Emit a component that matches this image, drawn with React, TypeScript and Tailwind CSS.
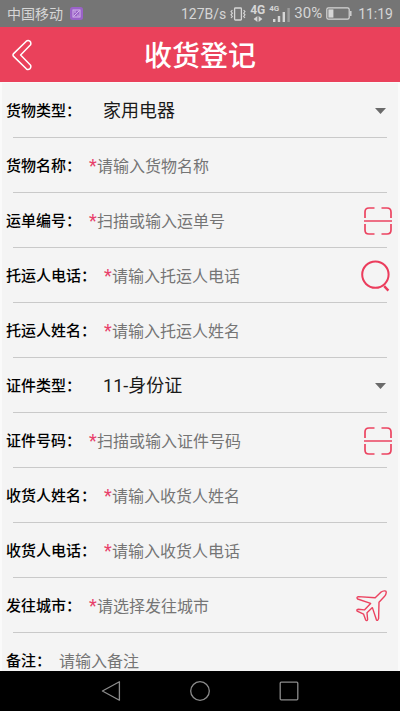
import { useId, type ReactNode } from "react";

function BackIcon() {
  return (
    <svg width="22" height="32" viewBox="0 0 22 32" fill="none" stroke="#fff" strokeWidth="1.5" strokeLinejoin="round">
      <path d="M14.3 2.2L1.6 14.6Q0.4 16 1.6 17.4L14.3 29.8Q16 31.2 17.8 29.9Q19.4 28.4 18.6 26.2L8.6 16L18.6 5.8Q19.4 3.6 17.8 2.1Q16 0.8 14.3 2.2Z" />
    </svg>
  );
}

function ScanIcon() {
  return (
    <svg width="28" height="28" viewBox="0 0 28 28" fill="none" stroke="#eb4360" strokeWidth="1.7">
      <path d="M1 11V5Q1 1 5 1H10.5M17.5 1H23Q27 1 27 5V11M27 17V23Q27 27 23 27H17.5M10.5 27H5Q1 27 1 23V17" />
      <path d="M0 14H28" strokeWidth="1.5" />
    </svg>
  );
}

function SearchIcon() {
  return (
    <svg width="29" height="32" viewBox="0 0 29 32" fill="none" stroke="#eb3c5c" strokeWidth="2">
      <circle cx="14.4" cy="14.6" r="13.2" />
      <path d="M23.2 26.2L27.4 30.6" strokeWidth="2.4" />
    </svg>
  );
}

function PlaneIcon() {
  return (
    <svg width="31" height="32" viewBox="0 0 31 32" fill="none" stroke="#eb4360" strokeWidth="1.4" strokeLinejoin="round">
      <path d="M19.2 7.8L24.6 2.4Q27.6 0.2 29.9 1.2Q31 3.4 28.4 6.6L23 12.2L22.6 28.6Q21.6 31.4 20.4 29.8L16.4 17.6L11 22.8L11.6 29.4Q10.8 31.6 9.6 29.8L7.6 24.2L1.2 21.2Q0.2 19.6 2.2 19.2L8.4 19.9L14.6 13.4L1.6 9Q0 7.4 2.4 6.6Z" />
    </svg>
  );
}

function StatusBar() {
  return (
    <div className="flex h-[27px] shrink-0 items-center justify-between bg-[#757575] px-[7px] text-[14px] leading-none text-[#d6d6d6]">
      <div className="flex items-center gap-[7px]">
        <span>中国移动</span>
        <svg width="13" height="13" viewBox="0 0 13 13" fill="none" stroke="#d3b5ea" strokeWidth="1">
          <rect width="13" height="13" rx="2.5" fill="#9a62c8" stroke="none" />
          <rect x="3" y="3" width="7" height="7" />
          <path d="M3.5 9.5L9.5 3.5M5 3.5V6M8 7.5V9.5" />
        </svg>
      </div>
      <div className="flex items-center gap-[4px]">
        <span>127B/s</span>
        <svg width="16" height="14" viewBox="0 0 16 14" fill="none" stroke="#d6d6d6" strokeWidth="1.3">
          <rect x="4.6" y="1" width="6.8" height="12" rx="0.8" />
          <path d="M2.4 3L1 4.6L2.4 6.2L1 7.8L2.4 9.4L1 11M13.6 3L15 4.6L13.6 6.2L15 7.8L13.6 9.4L15 11" strokeWidth="1.1" />
        </svg>
        <div className="flex w-[15px] flex-col items-center">
          <span className="text-[12px] font-bold leading-[11px]">4G</span>
          <svg width="10" height="6" viewBox="0 0 10 6" fill="#d6d6d6">
            <path d="M4.4 0V6L0.6 3ZM5.6 0V6L9.4 3Z" />
          </svg>
        </div>
        <div className="flex h-[18px] w-[21px] flex-col items-start">
          <span className="text-[8px] font-bold leading-[7px]">4G</span>
          <svg className="-mt-[4px] self-end" width="17" height="14" viewBox="0 0 17 14" fill="#d6d6d6">
            <path d="M0 11H2.4V14H0ZM4.8 8H7.2V14H4.8ZM9.6 4H12V14H9.6Z" />
            <path d="M14.4 0H16.8V14H14.4Z" fill="#9c9c9c" />
          </svg>
        </div>
        <span className="text-[15px]">30%</span>
        <svg width="26" height="13" viewBox="0 0 26 13" fill="none" stroke="#d6d6d6" strokeWidth="1.2">
          <rect x="0.8" y="0.8" width="22.4" height="11.4" rx="1.6" />
          <path d="M24.8 4V9" strokeWidth="1.4" />
          <rect x="2.4" y="2.4" width="5" height="8.2" fill="#d6d6d6" stroke="none" />
        </svg>
        <span className="pl-[2px]">11:19</span>
      </div>
    </div>
  );
}

function Row({ children }: { children: ReactNode }) {
  return (
    <div>
      <div className="flex h-[54px] items-center pl-[4px] pt-[2px]">{children}</div>
      <div className="mx-[11px] h-px bg-[#c9c9c9]" />
    </div>
  );
}

const labelClass = "shrink-0 text-[15px] font-medium leading-6 text-black";

function TextRow({
  label,
  placeholder,
  required = true,
  action,
}: {
  label: string;
  placeholder: string;
  required?: boolean;
  action?: ReactNode;
}) {
  const id = useId();
  return (
    <Row>
      <label htmlFor={id} className={labelClass}>
        {label}：
      </label>
      <div className="flex min-w-0 flex-1 items-center pl-[8px]">
        {required && <span className="w-[8px] shrink-0 text-[18px] leading-6 text-[#e8406a]">*</span>}
        <input
          id={id}
          type="text"
          placeholder={placeholder}
          className="h-10 min-w-0 flex-1 bg-transparent text-[16px] leading-6 text-[#222] outline-none placeholder:text-[#757575] placeholder:opacity-100"
        />
      </div>
      {action}
    </Row>
  );
}

function SelectRow({ label, options }: { label: string; options: string[] }) {
  const id = useId();
  return (
    <Row>
      <label htmlFor={id} className={labelClass}>
        {label}：
      </label>
      <div className="relative ml-[22px] mr-[12px] flex-1">
        <select id={id} className="w-full appearance-none bg-transparent text-[18px] leading-7 text-[#1a1a1a] outline-none">
          {options.map((option) => (
            <option key={option}>{option}</option>
          ))}
        </select>
        <svg className="pointer-events-none absolute right-0 top-1/2 -translate-y-1/2" width="11" height="6" viewBox="0 0 11 6" fill="#6a6a6a">
          <path d="M0 0H11L5.5 6Z" />
        </svg>
      </div>
    </Row>
  );
}

function ScanButton() {
  return (
    <button type="button" aria-label="扫描" className="mr-[6px] shrink-0">
      <ScanIcon />
    </button>
  );
}

export default function App() {
  return (
    <div className="flex h-screen flex-col overflow-hidden font-[Roboto,'Noto_Sans_CJK_SC',sans-serif]">
      <StatusBar />
      <header className="grid h-[55px] shrink-0 grid-cols-[44px_1fr_44px] items-center bg-[#ea415b]">
        <button type="button" aria-label="返回" className="pl-[12px]">
          <BackIcon />
        </button>
        <h1 className="pt-[4px] text-center text-[28px] font-medium leading-10 text-white">收货登记</h1>
      </header>
      <main className="min-h-0 flex-1 overflow-hidden bg-[#fafafa] px-[2px] pt-px">
        <form className="bg-[#f4f4f4]">
          <SelectRow label="货物类型" options={["家用电器"]} />
          <TextRow label="货物名称" placeholder="请输入货物名称" />
          <TextRow label="运单编号" placeholder="扫描或输入运单号" action={<ScanButton />} />
          <TextRow
            label="托运人电话"
            placeholder="请输入托运人电话"
            action={
              <button type="button" aria-label="查询" className="mr-[8px] shrink-0">
                <SearchIcon />
              </button>
            }
          />
          <TextRow label="托运人姓名" placeholder="请输入托运人姓名" />
          <SelectRow label="证件类型" options={["11-身份证"]} />
          <TextRow label="证件号码" placeholder="扫描或输入证件号码" action={<ScanButton />} />
          <TextRow label="收货人姓名" placeholder="请输入收货人姓名" />
          <TextRow label="收货人电话" placeholder="请输入收货人电话" />
          <TextRow
            label="发往城市"
            placeholder="请选择发往城市"
            action={
              <button type="button" aria-label="选择城市" className="mr-[11px] shrink-0">
                <PlaneIcon />
              </button>
            }
          />
          <TextRow label="备注" placeholder="请输入备注" required={false} />
        </form>
      </main>
      <nav className="flex h-[40px] shrink-0 items-center justify-center gap-[69px] bg-black">
        <button type="button" aria-label="后退">
          <svg width="20" height="20" viewBox="0 0 20 20" fill="none" stroke="#8c8c8c" strokeWidth="1.3" strokeLinejoin="round">
            <path d="M18.4 0.8V19.2L1.4 10Z" />
          </svg>
        </button>
        <button type="button" aria-label="主屏幕">
          <svg width="20" height="20" viewBox="0 0 20 20" fill="none" stroke="#8c8c8c" strokeWidth="1.3">
            <circle cx="10" cy="10" r="9.3" />
          </svg>
        </button>
        <button type="button" aria-label="最近任务">
          <svg width="20" height="20" viewBox="0 0 20 20" fill="none" stroke="#8c8c8c" strokeWidth="1.3">
            <rect x="1.2" y="1.2" width="17.6" height="17.6" rx="1" />
          </svg>
        </button>
      </nav>
    </div>
  );
}
